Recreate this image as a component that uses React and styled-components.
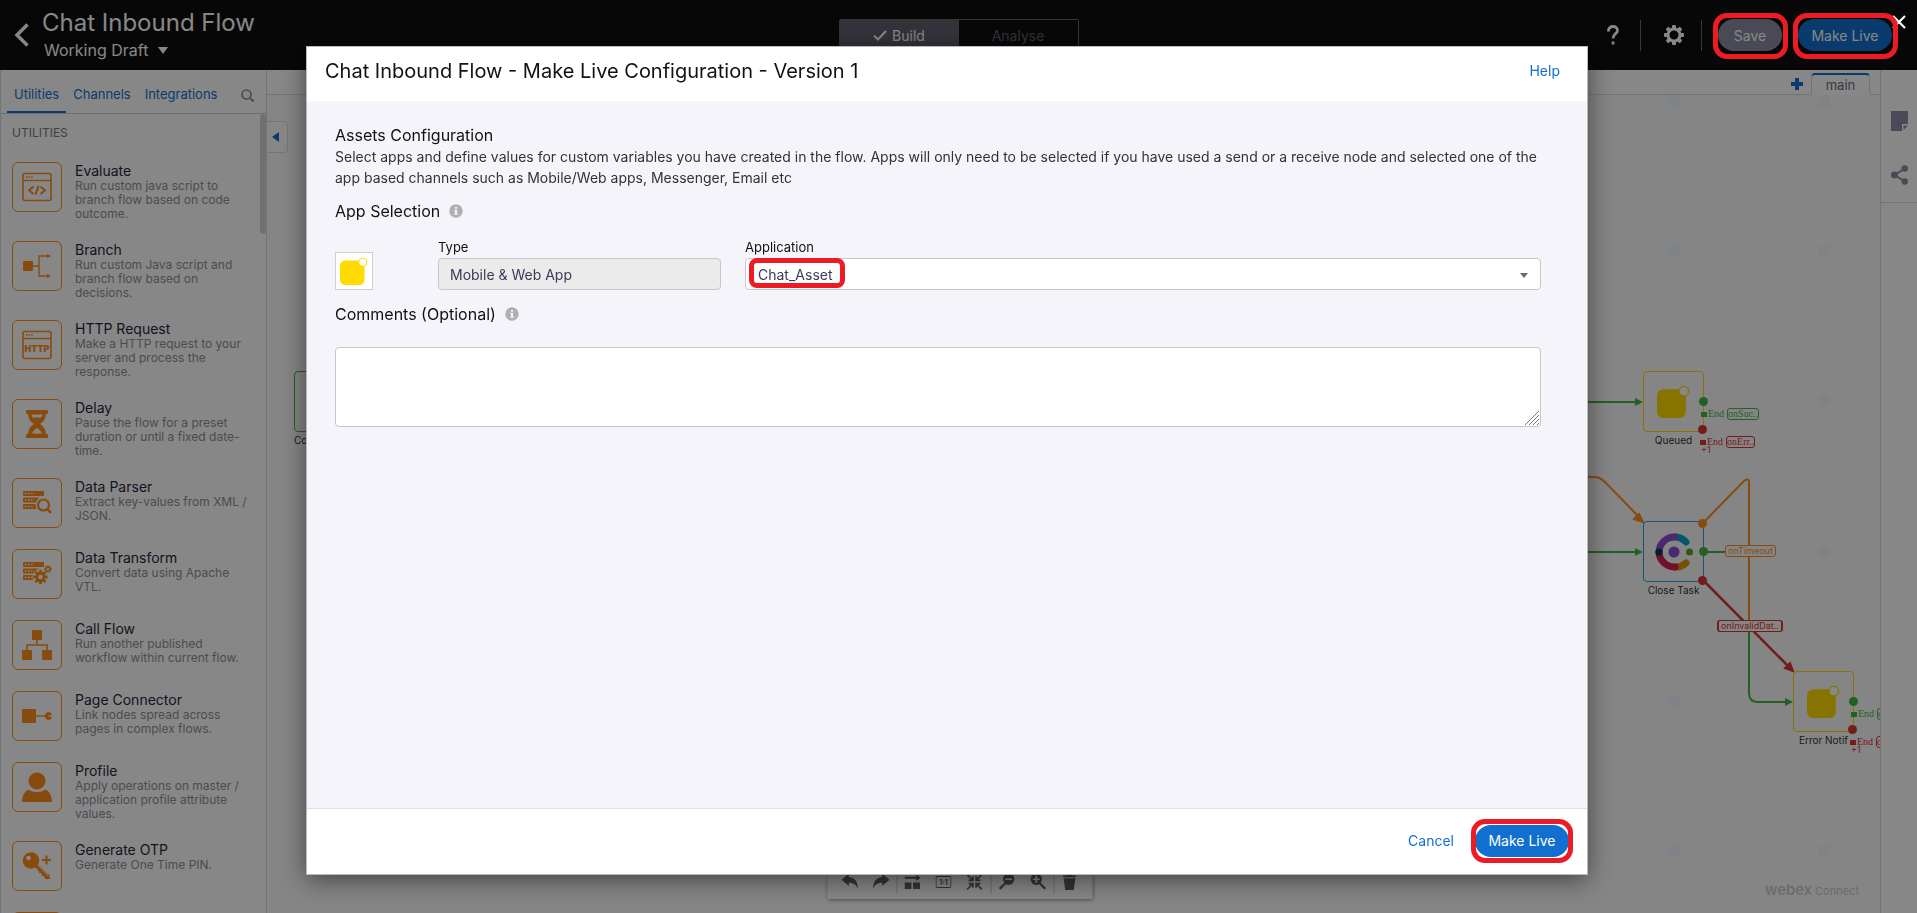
import React from "react";
import styled, { createGlobalStyle, css } from "styled-components";

const C = {
  blue: "#1170cf",
  orange: "#ff8f1c",
  green: "#43b543",
  red: "#d93636",
  yellow: "#ffdb00",
  slate: "#8a8da0",
  mark: "#ed1c24",
};

const GlobalStyle = createGlobalStyle`
  *, *::before, *::after { box-sizing: border-box; }
  html, body, #root { height: 100%; }
  body { margin: 0; overflow: hidden; font-family: Inter, "Liberation Sans", sans-serif; font-size: 14px; color: #121212; }
  button, input, select, textarea { font-family: inherit; }
  h1, h2, h3, h4, p, ul { margin: 0; padding: 0; font-weight: 400; }
`;

const Page = styled.div`
  display: flex;
  flex-direction: column;
  height: 100%;
  position: relative;
  background: #fff;
`;

/* ---------- top bar ---------- */
const TopBar = styled.header`
  display: grid;
  grid-template-columns: 1fr 240px 1fr;
  align-items: center;
  height: 70px;
  flex: none;
  background: #0e0e0e;
  color: #fff;
`;
const FlowInfo = styled.div`
  display: flex;
  align-items: center;
  gap: 13px;
  padding-left: 14px;
`;
const IconButton = styled.button`
  display: flex;
  align-items: center;
  justify-content: center;
  padding: 0;
  border: 0;
  background: none;
  color: inherit;
`;
const FlowTitle = styled.h1`
  font-size: 24px;
  line-height: 30px;
`;
const DraftPicker = styled.button`
  display: flex;
  align-items: center;
  gap: 10px;
  padding: 0 2px;
  border: 0;
  background: none;
  color: #fff;
  font-size: 16px;
  line-height: 24px;
`;
const ModeSwitch = styled.div`
  display: grid;
  grid-template-columns: 1fr 1fr;
  height: 32px;
  border: 1px solid #60616f;
  border-radius: 2px;
`;
const ModeButton = styled.button`
  display: flex;
  align-items: center;
  justify-content: center;
  gap: 5px;
  padding: 0;
  border: 0;
  font-size: 14px;
  background: ${(p) => (p.$active ? "#60616f" : "none")};
  color: ${(p) => (p.$active ? "#fff" : "#60616f")};
`;
const TopActions = styled.div`
  display: flex;
  align-items: center;
  justify-content: flex-end;
  gap: 16px;
  padding-right: 25px;
`;
const TopDivider = styled.span`
  width: 1px;
  height: 31px;
  margin-left: -6px;
  background: #6a6a6a;
`;
const ToolSlot = styled(IconButton)`
  width: 34px;
  height: 32px;
`;
const Pill = styled.button`
  height: 32px;
  padding: 0;
  width: ${(p) => (p.$wide ? 94 : 64)}px;
  border: 0;
  border-radius: 16px;
  font-size: 14px;
  color: #fff;
  background: ${(p) => (p.$muted ? C.slate : C.blue)};
`;

/* ---------- workspace ---------- */
const Workspace = styled.div`
  display: flex;
  flex: 1;
  min-height: 0;
`;
const Sidebar = styled.aside`
  display: flex;
  flex-direction: column;
  width: 267px;
  flex: none;
  border: solid #dcdcdc;
  border-width: 0 1px;
  overflow: hidden;
`;
const SideTabs = styled.nav`
  display: flex;
  height: 44px;
  flex: none;
  padding: 7px 12px 0 6px;
  border-bottom: 1px solid #d0d0d0;
`;
const SideTab = styled.button`
  padding: 0 7px;
  border: 0;
  border-bottom: 2px solid ${(p) => (p.$active ? C.blue : "transparent")};
  background: none;
  color: ${C.blue};
  font-size: 13px;
`;
const SearchButton = styled(IconButton)`
  margin-left: auto;
  color: #8a8d96;
`;
const SideScroll = styled.div`
  display: flex;
  flex: 1;
  min-height: 0;
`;
const SideContent = styled.div`
  flex: 1;
  padding: 11px 8px 0 11px;
`;
const Thumb = styled.div`
  width: 6px;
  height: 120px;
  border-radius: 3px;
  background: #d4d4d6;
`;
const GroupTitle = styled.h2`
  font-size: 12px;
  line-height: 16px;
  color: #767a87;
`;
const UtilityList = styled.ul`
  display: flex;
  flex-direction: column;
  gap: 20px;
  padding-top: 21px;
  list-style: none;
`;
const Utility = styled.li`
  display: flex;
  gap: 13px;
  min-height: 51px;
`;
const UtilityIcon = styled.div`
  display: flex;
  align-items: center;
  justify-content: center;
  width: 50px;
  height: 50px;
  flex: none;
  border: 1px solid ${C.orange};
  border-radius: 6px;
  color: ${C.orange};
`;
const UtilityName = styled.h3`
  font-size: 14px;
  line-height: 17px;
  color: #282840;
`;
const UtilityText = styled.p`
  width: 172px;
  font-size: 12px;
  line-height: 14px;
  color: #8d9099;
`;

/* ---------- canvas ---------- */
const CanvasColumn = styled.main`
  display: flex;
  flex-direction: column;
  flex: 1;
  min-width: 0;
`;
const PageTabs = styled.div`
  display: flex;
  justify-content: flex-end;
  gap: 8px;
  height: 25px;
  flex: none;
  padding: 3px 10px 0 0;
  border-bottom: 1px solid #dcdcdc;
  color: ${C.blue};
`;
const PageTab = styled.button`
  width: 59px;
  height: 22px;
  padding: 0;
  border: 1px solid #dcdcdc;
  border-top: 2px solid ${C.blue};
  border-bottom-color: #fff;
  border-radius: 4px 4px 0 0;
  background: #fff;
  color: #6d6f7c;
  font-size: 13px;
`;
const Canvas = styled.div`
  position: relative;
  flex: 1;
  overflow: hidden;
  background-color: #fcfcfc;
  background-image: radial-gradient(circle at 57px 6px, #f0f6ff 6px, transparent 7px);
  background-size: 150px 150px;
`;
const CollapseButton = styled.button`
  position: absolute;
  left: 0;
  top: 26px;
  display: flex;
  align-items: center;
  justify-content: center;
  width: 21px;
  height: 32px;
  padding: 0 4px 0 0;
  border: 1px solid #dedede;
  border-left: 0;
  border-radius: 0 4px 4px 0;
  background: #fff;
  color: ${C.blue};
`;
const Edges = styled.svg`
  position: absolute;
  left: 0;
  top: 0;
`;
const Node = styled.div`
  position: absolute;
  left: ${(p) => p.$x}px;
  top: ${(p) => p.$y}px;
  display: flex;
  flex-direction: column;
  align-items: ${(p) => (p.$start ? "flex-start" : "center")};
  width: 61px;
`;
const NodeBox = styled.div`
  display: flex;
  align-items: center;
  justify-content: center;
  width: 61px;
  height: 61px;
  border: 1px solid ${(p) => p.$tone};
  border-radius: 4px;
`;
const NodeName = styled.span`
  font-size: 10px;
  line-height: 17px;
  color: #333;
  white-space: nowrap;
`;
const Port = styled.span`
  position: absolute;
  left: ${(p) => p.$x}px;
  top: ${(p) => p.$y}px;
  width: 9px;
  height: 9px;
  border-radius: 50%;
  background: ${(p) => p.$tone};
`;
const Outcome = styled.div`
  position: absolute;
  left: ${(p) => p.$x}px;
  top: ${(p) => p.$y}px;
  display: flex;
  align-items: center;
  gap: 1px;
  color: ${(p) => p.$tone};
  font: 10px/12px "Liberation Serif", serif;
  white-space: nowrap;
  &::before {
    content: "";
    width: 6px;
    height: 5px;
    background: ${(p) => p.$tone};
  }
`;
const OutcomeTag = styled.span`
  margin-left: 2px;
  height: 12px;
  border: 1px solid;
  border-radius: 3px;
  line-height: 10px;
`;
const More = styled.span`
  position: absolute;
  left: 58px;
  top: 73px;
  font-size: 9px;
  line-height: 11px;
  color: ${C.red};
`;
const EdgeTag = styled.span`
  position: absolute;
  left: ${(p) => p.$x}px;
  top: ${(p) => p.$y}px;
  height: 12px;
  padding: 0 2px;
  border: 1px solid;
  border-radius: 3px;
  background: #fcfcfc;
  color: ${(p) => p.$tone};
  font-size: 9px;
  line-height: 10px;
  white-space: nowrap;
  ${(p) => p.$double && css`border-width: 1px 2px;`}
`;
const Brand = styled.div`
  position: absolute;
  right: 21px;
  bottom: 14px;
  display: flex;
  align-items: baseline;
  gap: 3px;
  color: #c9c9c9;
  font-size: 11px;
  b { font-size: 15px; font-weight: 500; }
`;
const CanvasTools = styled.div`
  position: absolute;
  left: calc(50% + 1px);
  bottom: 14px;
  transform: translateX(-50%);
  display: flex;
  align-items: center;
  height: 35px;
  padding: 0 7px;
  background: #fff;
  box-shadow: 0 1px 4px rgba(0, 0, 0, 0.4);
  color: #60616f;
`;
const CanvasTool = styled(IconButton)`
  width: 31px;
  height: 32px;
`;
const ToolDivider = styled.span`
  width: 1px;
  height: 25px;
  background: #cfcfd4;
`;
const Rail = styled.aside`
  width: 37px;
  flex: none;
  border-left: 1px solid #dcdcdc;
  color: ${C.slate};
`;
const RailGroup = styled.div`
  display: flex;
  flex-direction: column;
  align-items: center;
  gap: 34px;
  height: 133px;
  padding-top: 41px;
  border-bottom: 1px solid #dcdcdc;
`;

/* ---------- dialog ---------- */
const Overlay = styled.div`
  position: fixed;
  inset: 0;
  padding: 46px 329px 38px 306px;
  background: rgba(0, 0, 0, 0.47);
`;
const CloseButton = styled(IconButton)`
  position: absolute;
  top: 15px;
  right: 11px;
  color: #fff;
`;
const Callout = styled.span`
  position: absolute;
  inset: ${(p) => p.$inset};
  width: ${(p) => (p.$w ? `${p.$w}px` : "auto")};
  height: ${(p) => (p.$h ? `${p.$h}px` : "auto")};
  border: 5px solid ${C.mark};
  border-radius: ${(p) => (p.$tight ? 8 : 14)}px;
  pointer-events: none;
`;
const Dialog = styled.section`
  display: flex;
  flex-direction: column;
  height: 100%;
  border: 1px solid #b9b9b9;
  background: #fff;
  box-shadow: 0 5px 24px rgba(0, 0, 0, 0.5);
`;
const DialogHead = styled.header`
  display: flex;
  align-items: center;
  justify-content: space-between;
  height: 54px;
  flex: none;
  padding: 0 27px 6px 18px;
`;
const DialogTitle = styled.h2`
  font-size: 20px;
  line-height: 28px;
`;
const TextLink = styled.a`
  color: ${C.blue};
  font-size: 14px;
  line-height: 20px;
  text-decoration: none;
`;
const DialogBody = styled.div`
  flex: 1;
  padding: 23px 46px 24px 28px;
  background: #f4f4fa;
`;
const SectionTitle = styled.h3`
  display: flex;
  align-items: center;
  gap: 9px;
  font-size: 16px;
  line-height: 22px;
`;
const Description = styled.p`
  margin-bottom: 12px;
  font-size: 14px;
  line-height: 21px;
  color: #333;
`;
const AppRow = styled.div`
  display: grid;
  grid-template-columns: 103px 283px 1fr;
  align-items: end;
  margin: 14px 0 13px;
`;
const AppLogo = styled.div`
  display: flex;
  align-items: center;
  justify-content: center;
  width: 38px;
  height: 38px;
  border: 1px solid #d0d0d0;
  background: #fff;
`;
const Field = styled.div`
  position: relative;
  display: flex;
  flex-direction: column;
  margin-left: ${(p) => (p.$spaced ? 24 : 0)}px;
`;
const FieldLabel = styled.label`
  font-size: 13px;
  line-height: 22px;
`;
const control = css`
  width: 100%;
  border: 1px solid #c7c7c7;
  border-radius: 4px;
  font-size: 14px;
  color: #3a3a5a;
`;
const TextInput = styled.input`
  ${control}
  height: 32px;
  padding: 0 11px;
  background: #ebebeb;
`;
const Select = styled.select`
  ${control}
  height: 32px;
  padding: 0 12px;
  appearance: none;
  background: #fff;
`;
const SelectArrow = styled.span`
  position: absolute;
  right: 13px;
  bottom: 12px;
  border: 4px solid transparent;
  border-top: 5px solid #6a6a6a;
  border-bottom: 0;
`;
const CommentBox = styled.div`
  position: relative;
  margin-top: 22px;
`;
const Comments = styled.textarea`
  ${control}
  display: block;
  height: 80px;
  resize: none;
  background: #fff;
`;
const Grip = styled.svg`
  position: absolute;
  right: 2px;
  bottom: 2px;
`;
const DialogFoot = styled.footer`
  display: flex;
  align-items: center;
  justify-content: flex-end;
  gap: 21px;
  height: 66px;
  flex: none;
  padding: 0 18px 2px 0;
  border-top: 1px solid #dedee3;
`;
const Marked = styled.div`
  position: relative;
  display: flex;
`;

/* ---------- drawings ---------- */
const Svg = ({ s = 30, children, ...rest }) => (
  <svg width={s} height={s} viewBox="0 0 30 30" fill="currentColor" aria-hidden="true" {...rest}>
    {children}
  </svg>
);
const Frame = () => (
  <>
    <rect x="1" y="1.5" width="28" height="27" rx="2" fill="none" stroke="currentColor" strokeWidth="1.6" />
    <path d="M1 8.5h28" stroke="currentColor" strokeWidth="1.4" />
    <path d="M4 5h7" stroke="currentColor" strokeWidth="1.6" strokeDasharray="1.6 1" />
  </>
);
const Racks = () => (
  <>
    {[3, 9.5, 16].map((y) => (
      <g key={y}>
        <rect x="1" y={y} width={y < 5 ? 21 : 16} height="5" rx="0.8" />
        <path d={`M3 ${y + 2.5}h8`} stroke="#fff" strokeWidth="1.6" strokeDasharray="1.6 1.4" />
      </g>
    ))}
  </>
);
const Cog = ({ x, y, r, teeth = 8 }) => (
  <g>
    {Array.from({ length: teeth }, (_, i) => (
      <rect key={i} x={x - r * 0.22} y={y - r * 1.2} width={r * 0.44} height={r * 0.5} transform={`rotate(${(i * 360) / teeth} ${x} ${y})`} />
    ))}
    <circle cx={x} cy={y} r={r * 0.62} fill="none" stroke="currentColor" strokeWidth={r * 0.5} />
  </g>
);
const art = {
  evaluate: (
    <>
      <Frame />
      <path d="M11.5 14.5l-4.500 3.700 4.500 3.700M18.500 14.500l4.500 3.700-4.500 3.700M16.600 13.800l-3.200 8.800" fill="none" stroke="currentColor" strokeWidth="2" />
    </>
  ),
  branch: (
    <>
      <rect x="1" y="10" width="10" height="10" rx="1" />
      <path d="M11 15h6M26 5h-9v20h9" fill="none" stroke="currentColor" strokeWidth="1.4" />
      <path d="M25 2.8l4 2.200-4 2.200zM25 22.800l4 2.200-4 2.200z" />
    </>
  ),
  http: (
    <>
      <Frame />
      <text x="15" y="22" textAnchor="middle" fontSize="9" fontWeight="900" fontFamily="Inter, sans-serif">HTTP</text>
    </>
  ),
  delay: (
    <>
      <rect x="4" y="1" width="22" height="4" rx="1" />
      <rect x="4" y="25" width="22" height="4" rx="1" />
      <path fillRule="evenodd" d="M6 4h18c0 6-3 9-6 11 3 2 6 5 6 11H6c0-6 3-9 6-11-3-2-6-5-6-11zm3.500 1.500c.3 1 .6 2 1.200 3h8.600c.6-1 .9-2 1.200-3z" />
      <path d="M10 24.500c1.500-3 3-4 5-5.500 2 1.500 3.500 2.500 5 5.500z" fill="#fff" />
    </>
  ),
  parser: (
    <>
      <Racks />
      <circle cx="21.5" cy="17" r="8" fill="#fff" />
      <circle cx="21.5" cy="17" r="5.5" fill="#fff" stroke="currentColor" strokeWidth="2.200" />
      <path d="M25.500 21l3.500 4" stroke="currentColor" strokeWidth="2.600" />
    </>
  ),
  transform: (
    <>
      <Racks />
      <circle cx="18.5" cy="18" r="8" fill="#fff" />
      <Cog x={18.5} y={18} r={6} />
      <Cog x={26} y={10} r={3.2} />
    </>
  ),
  call: (
    <>
      <rect x="10" y="0" width="10" height="10" rx="1" />
      <rect x="0" y="20" width="10" height="10" rx="1" />
      <rect x="20" y="20" width="10" height="10" rx="1" />
      <path d="M15 10v5M5 20v-5h20v5" fill="none" stroke="currentColor" strokeWidth="1.600" />
    </>
  ),
  connector: (
    <>
      <rect x="0" y="8" width="14" height="14" rx="1" />
      <path d="M14 15h9" stroke="currentColor" strokeWidth="1.400" />
      <path d="M29 12.500a3.500 3.500 0 1 0 0 5M26 13.500h4M26 16.500h4" stroke="currentColor" strokeWidth="1" />
      <path d="M26.500 15h3" stroke="#fff" strokeWidth="1.200" />
    </>
  ),
  profile: (
    <>
      <circle cx="15" cy="9" r="8.5" />
      <path d="M0 30c0-6 2.500-10.500 6.500-12.500 5 3.500 12 3.500 17 0C27.500 19.500 30 24 30 30z" />
    </>
  ),
  otp: (
    <>
      <circle cx="9" cy="9.5" r="8.3" />
      <circle cx="6.5" cy="7" r="2.3" fill="#fff" />
      <path d="M13 13l13.500 14" stroke="currentColor" strokeWidth="4.400" />
      <path d="M17 18.500v3.500h3v3h3v3h5v-4" />
      <path d="M15.500 13.500l11.500 12" stroke="#fff" strokeWidth="1" />
      <path d="M24.500 4.500v9M20 9h9" stroke="currentColor" strokeWidth="2" />
    </>
  ),
};

const utilities = [
  ["evaluate", "Evaluate", "Run custom java script to branch flow based on code outcome."],
  ["branch", "Branch", "Run custom Java script and branch flow based on decisions."],
  ["http", "HTTP Request", "Make a HTTP request to your server and process the response."],
  ["delay", "Delay", "Pause the flow for a preset duration or until a fixed date-time."],
  ["parser", "Data Parser", "Extract key-values from XML / JSON."],
  ["transform", "Data Transform", "Convert data using Apache VTL."],
  ["call", "Call Flow", "Run another published workflow within current flow."],
  ["connector", "Page Connector", "Link nodes spread across pages in complex flows."],
  ["profile", "Profile", "Apply operations on master / application profile attribute values."],
  ["otp", "Generate OTP", "Generate One Time PIN."],
  ["profile", "", ""],
];

const AppShape = ({ s }) => (
  <svg width={s} height={s} viewBox="0 0 32 32" aria-hidden="true">
    <rect x="0" y="4" width="28" height="28" rx="6" fill={C.yellow} />
    <circle cx="26" cy="6" r="4.6" fill="#fff" stroke={C.yellow} strokeWidth="1.3" />
  </svg>
);
const TaskLogo = () => (
  <svg width="38" height="40" viewBox="0 0 38 40" fill="none" strokeWidth="7" strokeLinecap="round" aria-hidden="true">
    <path d="M20 5a15 15 0 0 1 11 5" stroke="#00a8c4" />
    <path d="M31 31a15 15 0 0 1-11 4" stroke="#dd9a00" />
    <path d="M4 20A15.500 15.500 0 0 1 20 5" stroke="#8f4fd6" />
    <path d="M4 20a15.500 15.500 0 0 0 16 15" stroke="#d4214f" />
    <circle cx="4" cy="20" r="3.5" fill="#043a5c" />
    <circle cx="19" cy="20" r="5.5" fill="#8f4fd6" />
    <circle cx="34.5" cy="20" r="3.5" fill="#5aa52c" />
  </svg>
);
const Info = () => (
  <svg width="14" height="14" viewBox="0 0 14 14" role="img" aria-label="Info">
    <circle cx="7" cy="7" r="6.7" fill="#b0b0b0" />
    <path d="M6 3h2v1.800H6zM5.300 5.800H8v3.700h.8v1.200H5.200V9.500H6V7h-.7z" fill="#f4f4fa" />
  </svg>
);
const Magnifier = ({ plus, flip }) => (
  <Svg s={17} transform={flip ? "scale(-1 1)" : undefined}>
    <circle cx="12" cy="11" r="10" />
    <path d="M18 18l10 10" stroke="currentColor" strokeWidth="4" />
    <path d={plus ? "M6 11h12M12 5v12" : "M6 11h12"} stroke="#fff" strokeWidth="3" />
  </Svg>
);
const Undo = ({ flip }) => (
  <Svg s={17} transform={flip ? "scale(-1 1)" : undefined}>
    <path d="M0 12L13 1v6c11 1 16 9 16 21-3-7-7-11-16-11v6z" />
  </Svg>
);

const EndNode = ({ x, y, name }) => (
  <Node $x={x} $y={y}>
    <NodeBox $tone={C.yellow}><AppShape s={33} /></NodeBox>
    <NodeName>{name}</NodeName>
    <Port $x={56} $y={26} $tone={C.green} />
    <Port $x={55} $y={54} $tone={C.red} />
    <Outcome $x={58} $y={37} $tone={C.green}>End<OutcomeTag>onSuc..</OutcomeTag></Outcome>
    <Outcome $x={57} $y={65} $tone={C.red}>End<OutcomeTag>onErr..</OutcomeTag></Outcome>
    <More>+1</More>
  </Node>
);

export default function App() {
  return (
    <>
      <GlobalStyle />
      <Page>
        <TopBar>
          <FlowInfo>
            <IconButton aria-label="Back">
              <svg width="15" height="24" viewBox="0 0 15 24" fill="none" stroke="#fff" strokeWidth="3.5"><path d="M13.500 1.500L3 12l10.500 10.500" /></svg>
            </IconButton>
            <div>
              <FlowTitle>Chat Inbound Flow</FlowTitle>
              <DraftPicker>
                Working Draft
                <svg width="10" height="7" viewBox="0 0 10 7"><path d="M0 0h10L5 7z" fill="#fff" /></svg>
              </DraftPicker>
            </div>
          </FlowInfo>
          <ModeSwitch>
            <ModeButton $active>
              <svg width="14" height="11" viewBox="0 0 14 11" fill="none" stroke="currentColor" strokeWidth="2"><path d="M1 5.500l4 4L13 1" /></svg>
              Build
            </ModeButton>
            <ModeButton>Analyse</ModeButton>
          </ModeSwitch>
          <TopActions>
            <ToolSlot aria-label="Help">
              <svg width="12" height="20" viewBox="0 0 12 20" fill="none" stroke="#fff" strokeWidth="2.8"><path d="M1.500 6.500V5.500c0-2.500 2-4 4.500-4s4.500 1.500 4.500 4C10.500 9 6 8.500 6 13.500M6 16.500v3" /></svg>
            </ToolSlot>
            <TopDivider />
            <ToolSlot aria-label="Settings">
              <svg width="20" height="20" viewBox="0 0 20 20" fill="#fff">
                {Array.from({ length: 8 }, (_, i) => <rect key={i} x="8" y="0" width="4" height="5" rx="1" transform={`rotate(${i * 45} 10 10)`} />)}
                <circle cx="10" cy="10" r="6" fill="none" stroke="#fff" strokeWidth="3" />
              </svg>
            </ToolSlot>
            <TopDivider />
            <Pill $muted>Save</Pill>
            <Pill $wide>Make Live</Pill>
          </TopActions>
        </TopBar>

        <Workspace>
          <Sidebar>
            <SideTabs>
              <SideTab $active>Utilities</SideTab>
              <SideTab>Channels</SideTab>
              <SideTab>Integrations</SideTab>
              <SearchButton aria-label="Search">
                <svg width="13" height="13" viewBox="0 0 13 13" fill="none" stroke="currentColor"><circle cx="5.5" cy="5.5" r="4.5" strokeWidth="1.6" /><path d="M9.500 9.500l3 3" strokeWidth="2" /></svg>
              </SearchButton>
            </SideTabs>
            <SideScroll>
              <SideContent>
                <GroupTitle>UTILITIES</GroupTitle>
                <UtilityList>
                  {utilities.map(([icon, name, text], i) => (
                    <Utility key={i}>
                      <UtilityIcon><Svg>{art[icon]}</Svg></UtilityIcon>
                      <div>
                        <UtilityName>{name}</UtilityName>
                        <UtilityText>{text}</UtilityText>
                      </div>
                    </Utility>
                  ))}
                </UtilityList>
              </SideContent>
              <Thumb />
            </SideScroll>
          </Sidebar>

          <CanvasColumn>
            <PageTabs>
              <IconButton aria-label="Add page">
                <svg width="12" height="12" viewBox="0 0 12 12"><path d="M6 0v12M0 6h12" stroke="currentColor" strokeWidth="4" /></svg>
              </IconButton>
              <PageTab>main</PageTab>
            </PageTabs>
            <Canvas>
              <Edges width="1614" height="818" fill="none" strokeWidth="2">
                <g stroke={C.green} fill={C.green}>
                  <path d="M1300 307h68M1300 457h68M1437 457h24" />
                  <path d="M1482 537v61q0 9 9 9h28" fill="none" />
                  <path d="M1368 303l8 4-8 4zM1368 453l8 4-8 4zM1518 603l8 4-8 4z" stroke="none" />
                </g>
                <g stroke={C.orange}>
                  <path d="M1300 382h27q6 0 11 5l33 34M1436 428l41-42q5-4 5 2v149" />
                  <path d="M1376 427l-9-3 5-5z" fill={C.orange} />
                </g>
                <g stroke={C.red}>
                  <path d="M1436 485l85 86" strokeWidth="2.5" />
                  <path d="M1526 576l-8-3 5-5z" fill={C.red} />
                </g>
              </Edges>
              <Node $x={27} $y={276} $start>
                <NodeBox $tone={C.green} />
                <NodeName>Con</NodeName>
              </Node>
              <EndNode x={1376} y={276} name="Queued" />
              <Node $x={1376} $y={426}>
                <NodeBox $tone="#2f9fe0"><TaskLogo /></NodeBox>
                <NodeName>Close Task</NodeName>
                <Port $x={55} $y={-2} $tone={C.orange} />
                <Port $x={56} $y={26} $tone={C.green} />
                <Port $x={55} $y={55} $tone={C.red} />
              </Node>
              <EndNode x={1526} y={576} name="Error Notif" />
              <EdgeTag $x={1458} $y={450} $tone={C.orange}>onTimeout</EdgeTag>
              <EdgeTag $x={1450} $y={525} $tone={C.red} $double>onInvalidDat..</EdgeTag>
              <CollapseButton aria-label="Collapse panel">
                <svg width="7" height="10" viewBox="0 0 7 10"><path d="M7 0v10L0 5z" fill="currentColor" /></svg>
              </CollapseButton>
              <Brand><b>webex</b>Connect</Brand>
            </Canvas>
          </CanvasColumn>

          <Rail>
            <RailGroup>
              <IconButton aria-label="Notes">
                <svg width="17" height="20" viewBox="0 0 17 20" fill="currentColor"><path d="M0 0h17v13h-6v7H0zM12.500 14.500H17L12.500 19z" /></svg>
              </IconButton>
              <IconButton aria-label="Share">
                <svg width="17" height="20" viewBox="0 0 17 20" fill="currentColor"><circle cx="3.5" cy="10" r="3.5" /><circle cx="13.7" cy="3.5" r="3.2" /><circle cx="13.7" cy="16.5" r="3.2" /><path d="M14 3.500L3.500 10 14 16.500" fill="none" stroke="currentColor" strokeWidth="2" /></svg>
              </IconButton>
            </RailGroup>
          </Rail>
        </Workspace>

        <CanvasTools>
          <CanvasTool aria-label="Undo"><Undo /></CanvasTool>
          <CanvasTool aria-label="Redo"><Undo flip /></CanvasTool>
          <ToolDivider />
          <CanvasTool aria-label="Arrange"><Svg s={16}><path d="M0 16h13v12H0zM16 16h13v12H16zM0 5h22V1l8 6-8 6V9H0z" /></Svg></CanvasTool>
          <CanvasTool aria-label="Actual size">
            <svg width="16" height="12" viewBox="0 0 16 12" fill="currentColor"><rect x="0.5" y="0.5" width="15" height="11" rx="1" fill="none" stroke="currentColor" /><text x="8" y="9" textAnchor="middle" fontSize="7" fontWeight="700">1:1</text></svg>
          </CanvasTool>
          <CanvasTool aria-label="Fit">
            <Svg s={16}><path d="M1 1l10 10M29 1L19 11M1 29l10-10M29 29L19 19M4 12h8V4M26 12h-8V4M4 18h8v8M26 18h-8v8" stroke="currentColor" strokeWidth="3" fill="none" /></Svg>
          </CanvasTool>
          <ToolDivider />
          <CanvasTool aria-label="Zoom out"><Magnifier flip /></CanvasTool>
          <CanvasTool aria-label="Zoom in"><Magnifier plus /></CanvasTool>
          <ToolDivider />
          <CanvasTool aria-label="Delete"><Svg s={16}><path d="M4 8h22l-3 22H7zM3 3h7l2-3h6l2 3h7v3H3z" /></Svg></CanvasTool>
        </CanvasTools>
      </Page>

      <Overlay>
        <CloseButton aria-label="Close">
          <svg width="14" height="14" viewBox="0 0 14 14" stroke="currentColor" strokeWidth="2.2"><path d="M1 1l12 12M13 1L1 13" /></svg>
        </CloseButton>
        <Callout $inset="13px 129px auto auto" $w={75} $h={46} />
        <Callout $inset="13px 19px auto auto" $w={105} $h={46} />
        <Dialog role="dialog" aria-labelledby="dialog-title">
          <DialogHead>
            <DialogTitle id="dialog-title">Chat Inbound Flow - Make Live Configuration - Version 1</DialogTitle>
            <TextLink href="#help">Help</TextLink>
          </DialogHead>
          <DialogBody>
            <SectionTitle>Assets Configuration</SectionTitle>
            <Description>
              Select apps and define values for custom variables you have created in the flow. Apps will only need to be selected if you have used a send or a receive node and selected one of the app based channels such as Mobile/Web apps, Messenger, Email etc
            </Description>
            <SectionTitle>App Selection <Info /></SectionTitle>
            <AppRow>
              <AppLogo><AppShape s={28} /></AppLogo>
              <Field>
                <FieldLabel htmlFor="type">Type</FieldLabel>
                <TextInput id="type" readOnly value="Mobile &amp; Web App" />
              </Field>
              <Field $spaced>
                <FieldLabel htmlFor="application">Application</FieldLabel>
                <Select id="application" defaultValue="Chat_Asset"><option>Chat_Asset</option></Select>
                <SelectArrow />
                <Callout $inset="auto auto 2px 4px" $w={96} $h={30} $tight />
              </Field>
            </AppRow>
            <SectionTitle as="label" htmlFor="comments">Comments (Optional) <Info /></SectionTitle>
            <CommentBox>
              <Comments id="comments" />
              <Grip width="14" height="14" viewBox="0 0 14 14" stroke="#777"><path d="M0 14L14 0M4 14L14 4M8 14l6-6M12 14l2-2" /></Grip>
            </CommentBox>
          </DialogBody>
          <DialogFoot>
            <TextLink href="#cancel">Cancel</TextLink>
            <Marked>
              <Pill $wide>Make Live</Pill>
              <Callout $inset="-6px -4px" />
            </Marked>
          </DialogFoot>
        </Dialog>
      </Overlay>
    </>
  );
}
